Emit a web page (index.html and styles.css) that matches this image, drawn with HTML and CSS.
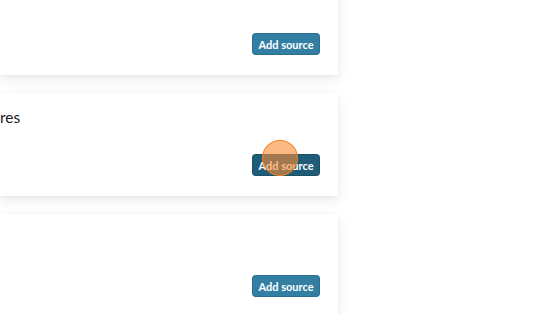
FILE: index.html
```html
<!DOCTYPE html>
<html>
<head>
<meta charset="utf-8">
<link rel="stylesheet" href="styles.css">
</head>
<body>
<div class="list">
  <div class="card">
    <div class="title"></div>
    <button class="btn">Add source</button>
  </div>
  <div class="card">
    <div class="title">res</div>
    <button class="btn btn-hover">Add source</button>
  </div>
  <div class="card">
    <div class="title"></div>
    <button class="btn">Add source</button>
  </div>
</div>
<div class="cursor"></div>
</body>
</html>
```
FILE: styles.css
```css
html, body {
  margin: 0;
  padding: 0;
  background: #ffffff;
  overflow: hidden;
  width: 560px;
  height: 315px;
}
body {
  font-family: Lato, "Open Sans", sans-serif;
  position: relative;
}
.list {
  display: flex;
  flex-direction: column;
  gap: 18px;
  margin-top: -28px;
  width: 338px;
}
.card {
  height: 103px;
  box-sizing: border-box;
  background: #fff;
  box-shadow: 0 4px 12px rgba(0, 0, 0, 0.09), 0 1px 3px rgba(0,0,0,0.04);
  display: flex;
  flex-direction: column;
  justify-content: space-between;
  padding: 14px 18px 20px 0;
}
.title {
  font-size: 15.5px;
  line-height: 20px;
  height: 20px;
  color: #1a1a1a;
}
.btn {
  align-self: flex-end;
  width: 68px;
  height: 22px;
  border: none;
  border-radius: 4px;
  background: #337ea3;
  color: #fff;
  font-family: Lato, sans-serif;
  font-weight: 700;
  font-size: 11px;
  padding: 0;
  box-shadow: inset 0 0 0 1px rgba(0,0,0,0.12);
}
.btn-hover {
  background: #1f5c78;
}
.cursor {
  position: absolute;
  left: 262px;
  top: 140px;
  width: 34px;
  height: 34px;
  border-radius: 50%;
  background: rgba(250, 140, 50, 0.6);
  border: 1px solid rgba(240, 130, 40, 0.95);
}
```
